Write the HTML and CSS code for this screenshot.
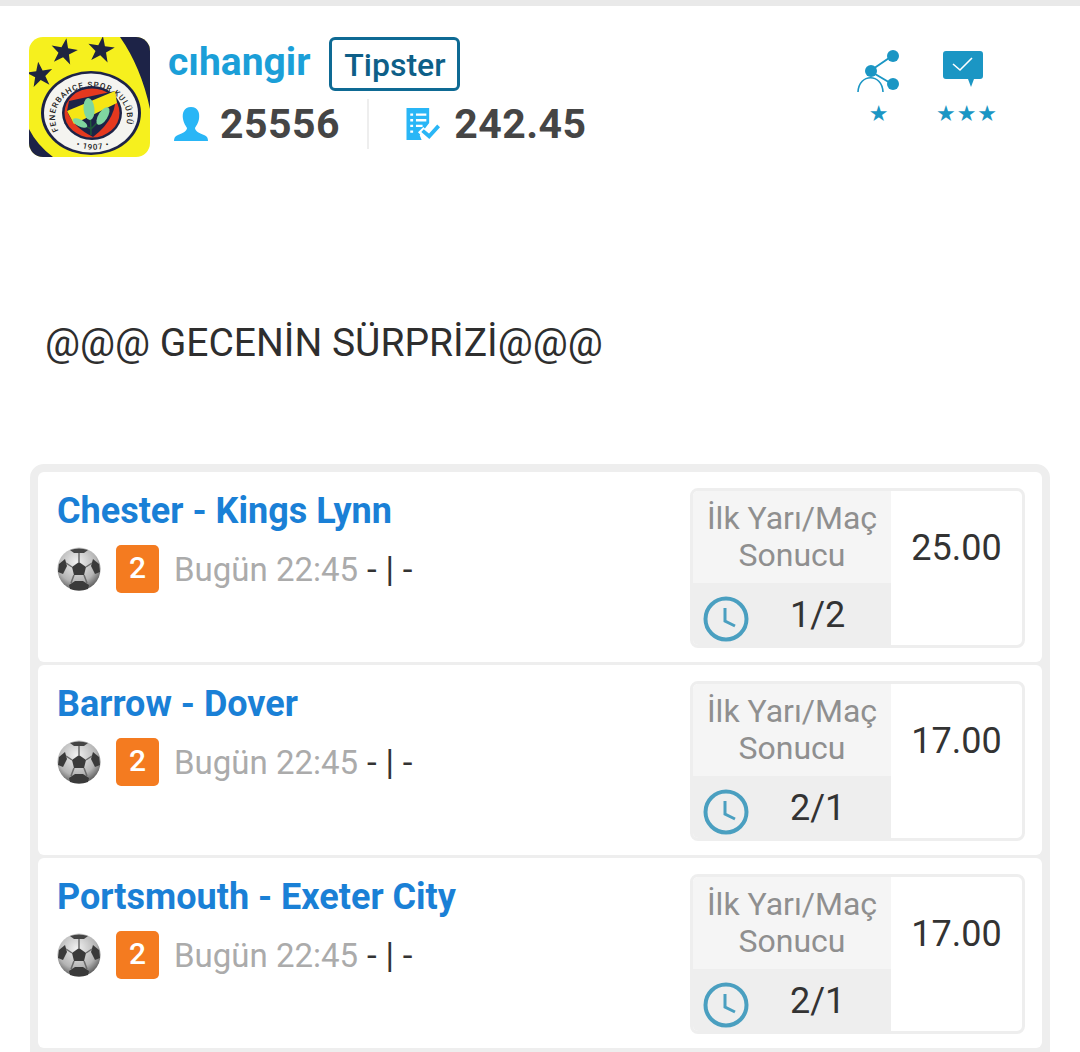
FILE: index.html
```html
<!DOCTYPE html>
<html lang="tr">
<head>
    <meta charset="UTF-8">
    <title>Tipster</title>
    <link rel="stylesheet" href="styles.css">
</head>
<body>
    <svg class="defs" width="0" height="0">
        <defs>
            <radialGradient id="ballShade" cx="45%" cy="35%" r="70%">
                <stop offset="0" stop-color="#f2f2f2"/>
                <stop offset="0.65" stop-color="#b4b4b4"/>
                <stop offset="1" stop-color="#4a4a4a"/>
            </radialGradient>
            <symbol id="ball" viewBox="0 0 44 44">
                <circle cx="22" cy="22" r="21.5" fill="url(#ballShade)"/>
                <polygon points="22,15 29,20 27,28 17,28 15,20" fill="#3a3a3a"/>
                <path d="M13 3 Q22 0 31 3 L27 6 L17 6 Z" fill="#444"/>
                <path d="M2 17 L8 12 L10 19 L6 27 L1 25 Z" fill="#3a3a3a"/>
                <path d="M42 17 L36 12 L34 19 L38 27 L43 25 Z" fill="#3a3a3a"/>
                <path d="M13 42 L12 38 L18 34 L26 34 L32 38 L31 42 Q22 45 13 42 Z" fill="#3a3a3a"/>
                <path d="M22 15 V6 M15 20 L9 16 M29 20 L35 16 M17 28 L14 36 M27 28 L30 36" stroke="#6a6a6a" stroke-width="1.5" fill="none"/>
            </symbol>
            <symbol id="clock" viewBox="0 0 46 46">
                <circle cx="23" cy="23" r="20.5" fill="none" stroke="#4a9fc0" stroke-width="4"/>
                <path d="M22 12 V25 L32 30" fill="none" stroke="#4a9fc0" stroke-width="3"/>
            </symbol>
            <polygon id="star" points="0,-10 2.4,-3.1 9.5,-3.1 3.8,1.2 5.9,8.1 0,3.8 -5.9,8.1 -3.8,1.2 -9.5,-3.1 -2.4,-3.1"/>
        </defs>
    </svg>

    <div class="topbar"></div>

    <div class="header">
        <svg class="avatar" viewBox="0 0 121 120">
            <defs>
                <path id="badgeTop" d="M32 97 A36 30 0 1 1 92 97"/>
                <path id="badgeBottom" d="M38 104 A40 36 0 0 0 90 104"/>
            </defs>
            <rect width="121" height="120" fill="#f6f01e"/>
            <path d="M91 0 H121 V72 Q112 30 91 0 Z" fill="#1d2347"/>
            <path d="M0 92 Q8 108 24 120 H0 Z" fill="#1d2347"/>
            <use href="#star" fill="#1f2440" transform="translate(35 15) rotate(10) scale(1.4)"/>
            <use href="#star" fill="#1f2440" transform="translate(72 13) rotate(8) scale(1.4)"/>
            <use href="#star" fill="#1f2440" transform="translate(11 38) rotate(-8) scale(1.35)"/>
            <ellipse cx="62" cy="76" rx="50" ry="42" fill="#1d2347"/>
            <ellipse cx="62" cy="76" rx="47" ry="39.5" fill="#f4f4f0"/>
            <text class="badge-text"><textPath href="#badgeTop" startOffset="3%">FENERBAHÇE SPOR KULÜBÜ</textPath></text>
            <text class="badge-text" text-anchor="middle"><textPath href="#badgeBottom" startOffset="50%">• 1907 •</textPath></text>
            <ellipse cx="63" cy="76" rx="30" ry="27" fill="#1d2347"/>
            <ellipse cx="63" cy="76" rx="27.5" ry="24.5" fill="#e5381f"/>
            <path d="M40 64 L86 54 Q90 80 64 100 Q44 90 38 74 Z" fill="#1d2347"/>
            <path d="M38 74 L86 54 L88 66 L45 87 Z" fill="#f6e614"/>
            <path d="M62 98 Q62 84 60 66 M62 92 Q68 86 74 80 M62 92 Q58 90 52 86" stroke="#1d5a3a" stroke-width="1.5" fill="none"/>
            <ellipse cx="60" cy="72" rx="5.5" ry="11" fill="#7fd6a0" transform="rotate(-6 60 72)"/>
            <ellipse cx="74" cy="79" rx="4.5" ry="10" fill="#7fd6a0" transform="rotate(32 74 79)"/>
            <ellipse cx="51" cy="86" rx="3.5" ry="8" fill="#7fd6a0" transform="rotate(-62 51 86)"/>
        </svg>
        <div class="user-info">
            <div class="name-row">
                <span class="username">cıhangir</span>
                <span class="tipster">Tipster</span>
            </div>
            <div class="stats-row">
                <div class="stat stat-first">
                    <svg class="icon-user" viewBox="0 0 36 36">
                        <path d="M18 1 C25 1 27 7 26 13 C25 18 23 20 22 22 C22 25 26 27 31 29 C34 30 35 32 35 35 H1 C1 32 2 30 5 29 C10 27 14 25 14 22 C13 20 11 18 10 13 C9 7 11 1 18 1 Z" fill="#29b6f6"/>
                    </svg>
                    <span class="stat-num">25556</span>
                </div>
                <div class="stat">
                    <svg class="icon-list" viewBox="0 0 38 36">
                        <path d="M1 1 H25 V17 L15 30 L17 35 H1 Z" fill="#29b6f6"/>
                        <path d="M5 8 H8 M11 8 H22 M5 14 H8 M11 14 H22 M5 20 H8 M11 20 H18 M5 26 H8" stroke="#fff" stroke-width="2.5" fill="none"/>
                        <path d="M16 24 L25 33 L37 19" stroke="#fff" stroke-width="8" fill="none"/>
                        <path d="M18 25 L25 31 L35 20" stroke="#29b6f6" stroke-width="4" fill="none"/>
                    </svg>
                    <span class="stat-num">242.45</span>
                </div>
            </div>
        </div>
        <div class="actions">
            <div class="action action-share">
                <svg class="icon-share" viewBox="0 0 46 44">
                    <path d="M14 22 L36 7 M14 22 L36 35" stroke="#1b96c4" stroke-width="2" fill="none"/>
                    <circle cx="37" cy="7" r="6" fill="#1b96c4"/>
                    <circle cx="15" cy="22" r="6" fill="#1b96c4"/>
                    <circle cx="37" cy="35" r="6" fill="#1b96c4"/>
                    <path d="M2 43 C3 24 26 24 27 43" stroke="#1b96c4" stroke-width="1.6" fill="none"/>
                </svg>
                <div class="stars">★</div>
            </div>
            <div class="action action-msg">
                <svg class="icon-msg" viewBox="0 0 40 38">
                    <path d="M3 0 H37 Q40 0 40 3 V25 Q40 28 37 28 H31 L28 36 L25 28 H3 Q0 28 0 25 V3 Q0 0 3 0 Z" fill="#1b96c4"/>
                    <path d="M10 13 L17 19 L29 7" stroke="#fff" stroke-width="1.6" fill="none"/>
                </svg>
                <div class="stars stars-three">★★★</div>
            </div>
        </div>
    </div>

    <div class="message">@@@ GECENİN SÜRPRİZİ@@@</div>

    <div class="coupon">
        <div class="match">
            <div class="match-left">
                <div class="teams">Chester - Kings Lynn</div>
                <div class="match-info">
                    <svg class="ball"><use href="#ball"/></svg>
                    <span class="num-badge">2</span>
                    <span class="time">Bugün 22:45</span>
                    <span class="score">- | -</span>
                </div>
            </div>
            <div class="bet">
                <div class="bet-left">
                    <div class="bet-type">İlk Yarı/Maç Sonucu</div>
                    <div class="bet-pick">
                        <svg class="clock"><use href="#clock"/></svg>
                        <span>1/2</span>
                    </div>
                </div>
                <div class="odds">25.00</div>
            </div>
        </div>
        <div class="match">
            <div class="match-left">
                <div class="teams">Barrow - Dover</div>
                <div class="match-info">
                    <svg class="ball"><use href="#ball"/></svg>
                    <span class="num-badge">2</span>
                    <span class="time">Bugün 22:45</span>
                    <span class="score">- | -</span>
                </div>
            </div>
            <div class="bet">
                <div class="bet-left">
                    <div class="bet-type">İlk Yarı/Maç Sonucu</div>
                    <div class="bet-pick">
                        <svg class="clock"><use href="#clock"/></svg>
                        <span>2/1</span>
                    </div>
                </div>
                <div class="odds">17.00</div>
            </div>
        </div>
        <div class="match">
            <div class="match-left">
                <div class="teams">Portsmouth - Exeter City</div>
                <div class="match-info">
                    <svg class="ball"><use href="#ball"/></svg>
                    <span class="num-badge">2</span>
                    <span class="time">Bugün 22:45</span>
                    <span class="score">- | -</span>
                </div>
            </div>
            <div class="bet">
                <div class="bet-left">
                    <div class="bet-type">İlk Yarı/Maç Sonucu</div>
                    <div class="bet-pick">
                        <svg class="clock"><use href="#clock"/></svg>
                        <span>2/1</span>
                    </div>
                </div>
                <div class="odds">17.00</div>
            </div>
        </div>
    </div>
</body>
</html>
```

FILE: styles.css
```css
/* page */
html, body {
    margin: 0;
    padding: 0;
    height: 1052px;
    overflow: hidden;
}

body {
    background-color: #fff;
    font-family: Roboto, "Liberation Sans", sans-serif;
    color: #333;
}

.defs {
    display: block;
    height: 0;
}

.topbar {
    height: 6px;
    background-color: #e9e9e9;
}

/* header */
.header {
    display: flex;
    align-items: flex-start;
    margin-top: 31px;
    margin-left: 29px;
    height: 120px;
}

.avatar {
    width: 121px;
    height: 120px;
    border-radius: 14px;
    flex-shrink: 0;
}

.badge-text {
    font-size: 8px;
    font-weight: 500;
    letter-spacing: 0.9px;
    fill: #222;
}

.user-info {
    margin-left: 18px;
    width: 500px;
}

.name-row {
    display: flex;
    align-items: center;
    height: 54px;
}

.username {
    font-size: 39px;
    font-weight: 700;
    color: #1b9fd8;
    line-height: 50px;
    padding-bottom: 4px;
}

.tipster {
    margin-left: 19px;
    width: 131px;
    height: 54px;
    box-sizing: border-box;
    border: 3px solid #0e6a94;
    border-radius: 6px;
    color: #0e5f88;
    font-size: 32px;
    font-weight: 500;
    line-height: 50px;
    text-align: center;
}

.stats-row {
    display: flex;
    align-items: center;
    margin-top: 8px;
    height: 50px;
}

.stat {
    display: flex;
    align-items: center;
}

.stat-first {
    padding-left: 5px;
    padding-right: 27px;
    height: 50px;
    border-right: 2px solid #eee;
    margin-right: 36px;
}

.stat-num {
    font-size: 41px;
    font-weight: 700;
    color: #454545;
    letter-spacing: 0.5px;
}

.icon-user {
    width: 36px;
    height: 36px;
    margin-right: 11px;
}

.icon-list {
    width: 37px;
    height: 34px;
    margin-right: 12px;
}

/* share / message */
.actions {
    display: flex;
    margin-left: 188px;
    margin-top: 12px;
}

.action {
    display: flex;
    flex-direction: column;
    align-items: center;
}

.action-share {
    width: 46px;
}

.action-msg {
    width: 60px;
    margin-left: 31px;
}

.icon-share {
    width: 46px;
    height: 44px;
}

.icon-msg {
    width: 40px;
    height: 38px;
    margin-top: 2px;
    margin-bottom: 4px;
}

.stars {
    margin-top: 8px;
    color: #1b96c4;
    font-family: "DejaVu Sans", sans-serif;
    font-size: 22px;
    line-height: 26px;
    letter-spacing: 1px;
}

.stars-three {
    margin-left: 8px;
    white-space: nowrap;
}

/* message text */
.message {
    margin-top: 162px;
    margin-left: 45px;
    font-size: 39px;
    line-height: 48px;
    color: #2e2e2e;
}

/* coupon */
.coupon {
    margin: 97px 30px 0;
    border: 8px solid #eeeeee;
    border-bottom-width: 4px;
    border-radius: 14px 14px 0 0;
    background-color: #eeeeee;
    display: flex;
    flex-direction: column;
    gap: 3px;
    height: 590px;
    width: 1004px;
}

.match {
    display: flex;
    justify-content: space-between;
    box-sizing: border-box;
    height: 190px;
    padding: 16px 17px 0 19px;
    background-color: #fff;
    border-radius: 6px;
}

.teams {
    font-size: 36px;
    font-weight: 700;
    line-height: 47px;
    color: #1a80d6;
}

.match-info {
    display: flex;
    align-items: center;
    margin-top: 10px;
}

.ball {
    width: 44px;
    height: 44px;
    filter: blur(0.6px);
}

.num-badge {
    margin-left: 15px;
    width: 43px;
    height: 48px;
    border-radius: 5px;
    background-color: #f47b20;
    color: #fff;
    font-size: 30px;
    font-weight: 500;
    line-height: 46px;
    text-align: center;
}

.time {
    margin-left: 15px;
    font-size: 33px;
    color: #ababab;
}

.score {
    margin-left: 9px;
    font-size: 35px;
    color: #333;
}

/* bet box */
.bet {
    display: flex;
    width: 335px;
    height: 160px;
    box-sizing: border-box;
    border: 3px solid #eeeeee;
    border-radius: 8px;
    overflow: hidden;
}

.bet-left {
    width: 198px;
    display: flex;
    flex-direction: column;
}

.bet-type {
    height: 92px;
    padding-top: 9px;
    box-sizing: border-box;
    background-color: #f5f5f5;
    color: #8f8f8f;
    font-size: 32px;
    line-height: 37px;
    text-align: center;
}

.bet-pick {
    flex: 1;
    display: flex;
    align-items: center;
    background-color: #eeeeee;
    font-size: 36px;
    color: #333;
}

.clock {
    width: 46px;
    height: 46px;
    margin-left: 10px;
    margin-top: 10px;
}

.bet-pick span {
    margin-left: 41px;
    margin-top: 2px;
}

.odds {
    flex: 1;
    text-align: center;
    font-size: 36px;
    line-height: 40px;
    padding-top: 37px;
    color: #333;
}
```
